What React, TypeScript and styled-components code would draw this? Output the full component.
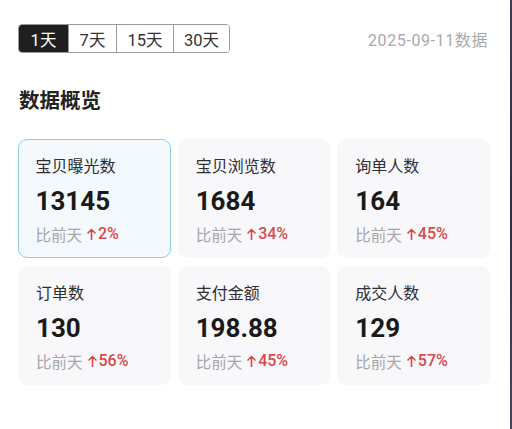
import React from "react";
import styled, { createGlobalStyle } from "styled-components";

const Global = createGlobalStyle`
  html, body { margin: 0; padding: 0; background: #ffffff; }
  body { font-family: Roboto, "Noto Sans CJK SC", sans-serif; }
`;

const Page = styled.div`
  display: flex;
  width: 512px;
  height: 429px;
  overflow: hidden;
`;

const Panel = styled.div`
  flex: 1;
  background: #ffffff;
  padding: 24px 20px 0 18px;
  box-sizing: border-box;
`;

const Edge = styled.div`
  width: 2px;
  background: linear-gradient(180deg, #3d3c5a, #2c2d4a 50%, #45456a);
`;

const TopBar = styled.div`
  display: flex;
  align-items: center;
  justify-content: space-between;
  padding-right: 2px;
`;

const Segments = styled.div`
  display: flex;
  height: 29px;
  border: 1px solid #9a9a9a;
  border-radius: 4px;
  overflow: hidden;
  box-sizing: border-box;
`;

const Segment = styled.div<{ $active?: boolean; $w: number }>`
  width: ${(p) => p.$w}px;
  box-sizing: border-box;
  display: flex;
  align-items: center;
  justify-content: center;
  font-family: Roboto, "Noto Sans CJK SC", sans-serif;
  font-size: 16.5px;
  color: ${(p) => (p.$active ? "#ffffff" : "#333333")};
  background: ${(p) => (p.$active ? "#1f1f1f" : "#ffffff")};
  & + & {
    border-left: 1px solid #9a9a9a;
  }
`;

const DateText = styled.div`
  font-family: Roboto, "Noto Sans CJK SC", sans-serif;
  font-size: 16px;
  letter-spacing: 0.6px;
  color: #a9a8ae;
`;

const Title = styled.h2`
  margin: 32px 0 0 1px;
  font-family: "Noto Sans CJK SC", sans-serif;
  font-size: 20.5px;
  font-weight: 700;
  line-height: 28px;
  color: #222222;
`;

const Grid = styled.div`
  display: grid;
  grid-template-columns: repeat(3, 1fr);
  column-gap: 7px;
  row-gap: 8px;
  margin-top: 26px;
  width: 472px;
`;

const Card = styled.div<{ $active?: boolean }>`
  height: 119px;
  box-sizing: border-box;
  border-radius: 9px;
  padding: ${(p) => (p.$active ? 13.5 : 15)}px 0 0 ${(p) => (p.$active ? 16.5 : 18)}px;
  background: ${(p) => (p.$active ? "#f4f9fd" : "#f8f7fa")};
  border: ${(p) => (p.$active ? "1.5px solid #8ecfe1" : "none")};
  display: flex;
  flex-direction: column;
`;

const Label = styled.div`
  font-family: "Noto Sans CJK SC", sans-serif;
  font-size: 16px;
  line-height: 22px;
  color: #2e2e33;
`;

const Value = styled.div`
  margin-top: 9px;
  font-family: Roboto, "Noto Sans CJK SC", sans-serif;
  font-size: 26px;
  font-weight: 700;
  line-height: 32px;
  color: #1a1a1a;
`;

const Compare = styled.div`
  margin-top: 6px;
  display: flex;
  align-items: center;
  font-family: "Noto Sans CJK SC", sans-serif;
  font-size: 15.5px;
  line-height: 22px;
  color: #a7a6ac;
`;

const Up = styled.span`
  display: inline-flex;
  align-items: center;
  margin-left: 5px;
  font-family: Roboto, sans-serif;
  font-size: 16px;
  font-weight: 500;
  color: #d9484b;
  svg {
    margin-right: 2px;
  }
`;

const Arrow = () => (
  <svg width="9" height="12" viewBox="0 0 9 12" fill="none">
    <path d="M4.5 11.5V1.5M1 5L4.5 1.5L8 5" stroke="#d9484b" strokeWidth="1.6" strokeLinecap="round" strokeLinejoin="round" />
  </svg>
);

const segs = [
  { t: "1天", w: 49 },
  { t: "7天", w: 48 },
  { t: "15天", w: 57 },
  { t: "30天", w: 56 },
];

const stats = [
  { label: "宝贝曝光数", value: "13145", pct: "2%" },
  { label: "宝贝浏览数", value: "1684", pct: "34%" },
  { label: "询单人数", value: "164", pct: "45%" },
  { label: "订单数", value: "130", pct: "56%" },
  { label: "支付金额", value: "198.88", pct: "45%" },
  { label: "成交人数", value: "129", pct: "57%" },
];

export default function App() {
  return (
    <>
      <Global />
      <Page>
        <Panel>
          <TopBar>
            <Segments>
              {segs.map((s, i) => (
                <Segment key={s.t} $w={s.w} $active={i === 0}>
                  {s.t}
                </Segment>
              ))}
            </Segments>
            <DateText>2025-09-11数据</DateText>
          </TopBar>
          <Title>数据概览</Title>
          <Grid>
            {stats.map((s, i) => (
              <Card key={s.label} $active={i === 0}>
                <Label>{s.label}</Label>
                <Value>{s.value}</Value>
                <Compare>
                  比前天
                  <Up>
                    <Arrow />
                    {s.pct}
                  </Up>
                </Compare>
              </Card>
            ))}
          </Grid>
        </Panel>
        <Edge />
      </Page>
    </>
  );
}
